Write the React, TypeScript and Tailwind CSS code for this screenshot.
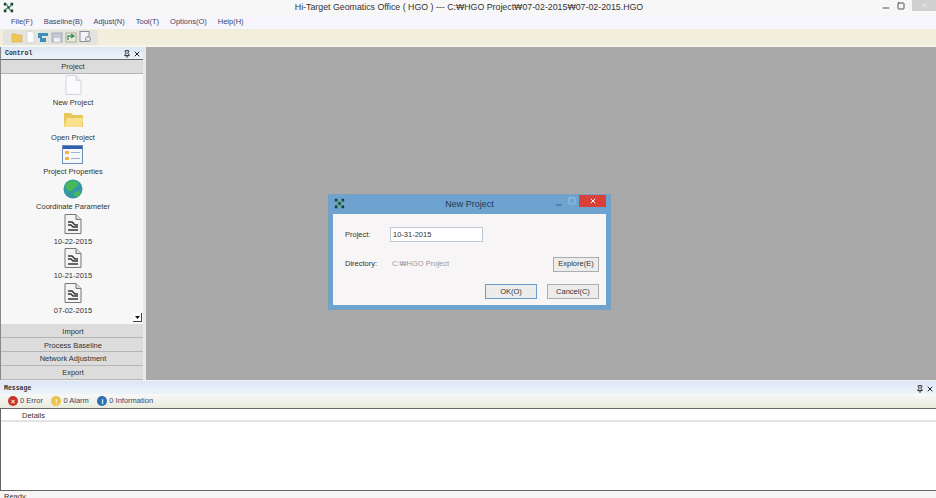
import { X, Pin, Minus, Square } from 'lucide-react';

const FONT = "font-['Liberation_Sans',Arial,sans-serif]";

const menus = ['File(F)', 'Baseline(B)', 'Adjust(N)', 'Tool(T)', 'Options(O)', 'Help(H)'];

// App logo, small green/black squares
const Logo = ({ size = 11 }: { size?: number }) => (
  <svg width={size} height={size} viewBox="0 0 13 13">
    <path d="M1 1h3v3H1zM9 1h3v3H9zM1 9h3v3H1zM9 9h3v3H9zM5 5h3v3H5z" fill="#1d3b35" />
    <path d="M4 3h2v2H4zM7 8h2v2H7zM3 7h2v2H3zM8 3h2v3H8z" fill="#3fa55a" />
  </svg>
);

const NewFileIcon = () => (
  <svg width="17" height="20" viewBox="0 0 17 20">
    <path d="M1 .5h10l5 5v14H1z" fill="#fbfbfe" stroke="#d2d4e0" />
    <path d="M11 .5v5h5" fill="#e6e7f0" stroke="#d2d4e0" />
  </svg>
);

const FolderIcon = () => (
  <svg width="21" height="17" viewBox="0 0 21 17">
    <path d="M1 16V2h7l2 2h10v12z" fill="#e9c65c" />
    <path d="M1 16l3-9h16.500l-2 9z" fill="#f9e08c" />
  </svg>
);

const PropertiesIcon = () => (
  <svg width="21" height="19" viewBox="0 0 21 19">
    <rect x=".5" y=".5" width="20" height="18" fill="#f4f7fb" stroke="#6f8db8" />
    <rect x="1" y="1" width="19" height="3" fill="#2f5fae" />
    <rect x="3" y="6" width="4" height="3" fill="#f0b04a" />
    <rect x="3" y="12" width="4" height="3" fill="#f0b04a" />
    <rect x="9" y="7" width="9" height="1" fill="#9fb4d0" />
    <rect x="9" y="13" width="9" height="1" fill="#9fb4d0" />
  </svg>
);

const GlobeIcon = () => (
  <svg width="20" height="20" viewBox="0 0 21 21">
    <circle cx="10.500" cy="10.500" r="10" fill="#3397a8" />
    <path d="M3 5c3-3 8-4 12-2 2 2 1 5-2 6-2 1-3 4-6 4-3-1-6-5-4-8zM12 14c3-1 6-2 7 0-1 3-4 5-6 5-2-1-2-4-1-5z" fill="#46b85a" />
  </svg>
);

const BaselineFileIcon = () => (
  <svg width="18" height="20" viewBox="0 0 18 20">
    <path d="M1 .5h11l5 5v14H1z" fill="#f4f4f4" stroke="#777" />
    <path d="M12 .5v5h5" fill="#ddd" stroke="#777" />
    <path d="M4 8h4l3 3h3M4 11h3l2 2h5" fill="none" stroke="#333" strokeWidth="1.400" />
    <rect x="4" y="15" width="10" height="2" fill="#666" />
  </svg>
);

const controlItems = [
  { icon: <NewFileIcon />, label: 'New Project' },
  { icon: <FolderIcon />, label: 'Open Project' },
  { icon: <PropertiesIcon />, label: 'Project Properties' },
  { icon: <GlobeIcon />, label: 'Coordinate Parameter' },
  { icon: <BaselineFileIcon />, label: '10-22-2015' },
  { icon: <BaselineFileIcon />, label: '10-21-2015' },
  { icon: <BaselineFileIcon />, label: '07-02-2015' },
];

// Small toolbar glyphs, faded like the reference
const toolIcons = [
  <svg key="open" width="12" height="11" viewBox="0 0 12 11">
    <path d="M1 10V2h4l1 1h5v7z" fill="#efc558" stroke="#d0a848" strokeWidth=".5" />
  </svg>,
  <svg key="new" width="10" height="12" viewBox="0 0 10 12">
    <path d="M2 .5h5l2 2v9H2z" fill="#fcfcfc" stroke="#d8d8d8" />
  </svg>,
  <svg key="import" width="12" height="11" viewBox="0 0 12 11">
    <path d="M1 1h10v3H5v2h4v4H3V6H1z" fill="#3d8fb8" />
  </svg>,
  <svg key="save" width="12" height="11" viewBox="0 0 12 11">
    <rect x="1" y="1" width="10" height="9" fill="#c5c9d4" stroke="#a8acb8" />
    <rect x="3" y="6" width="6" height="4" fill="#eceef2" />
  </svg>,
  <svg key="export" width="12" height="11" viewBox="0 0 12 11">
    <rect x="1" y="1" width="10" height="9" fill="#e8ecd8" stroke="#a8b098" />
    <path d="M3 8V4h6M6 2l3 2-3 2" fill="none" stroke="#3f8f60" strokeWidth="1.300" />
  </svg>,
  <svg key="doc" width="13" height="12" viewBox="0 0 13 12">
    <rect x="1" y=".5" width="9" height="10" fill="#f4f4f8" stroke="#8c8c98" />
    <circle cx="9" cy="8" r="2.500" fill="#e8e8ee" stroke="#8c8c98" />
  </svg>,
];

const PanelHeader = ({ title, tall }: { title: string; tall?: boolean }) => (
  <div
    className={`flex items-center justify-between bg-gradient-to-b from-[#dbe7f5] to-[#eef3fa] pl-1 pr-[2px] ${
      tall ? 'h-[13px] pt-[3px]' : 'h-3 pt-[2px]'
    }`}
  >
    <span className="font-['Liberation_Mono',monospace] text-[6.500px] font-bold text-[#333]">{title}</span>
    <div className="flex items-center gap-[2px] text-[#222]">
      <Pin size={8} strokeWidth={3} />
      <X size={8} strokeWidth={3} />
    </div>
  </div>
);

const Section = ({ label }: { label: string }) => (
  <div className="flex h-[14px] items-center justify-center border-b border-[#b5b5b5] bg-[#dcdcdc] pl-[2px] pt-[1px] text-[7.500px] text-[#333]">
    {label}
  </div>
);

const DialogButton = ({ label, primary, small }: { label: string; primary?: boolean; small?: boolean }) => (
  <div
    className={`flex h-[15px] items-center justify-center border bg-[#ececec] text-[7.500px] text-[#333] ${
      primary ? 'w-[52px] border-[#6d9cc8]' : small ? 'w-[46px] border-[#adadad]' : 'w-[52px] border-[#adadad]'
    }`}
  >
    {label}
  </div>
);

const StatusItem = ({ color, glyph, label }: { color: string; glyph: string; label: string }) => (
  <div className="flex items-center gap-[2px]">
    <span
      className="flex h-[10px] w-[10px] items-center justify-center rounded-full text-[7px] font-bold leading-none text-white"
      style={{ backgroundColor: color }}
    >
      {glyph}
    </span>
    <span className="text-[7.500px] text-[#444466]">{label}</span>
  </div>
);

export default function App() {
  return (
    <div className={`relative flex h-[498px] w-[936px] flex-col overflow-hidden bg-[#f8f8f8] ${FONT}`}>
      {/* Title bar */}
      <div className="relative flex h-[15px] items-center justify-center bg-[#f7f7f7] pl-[2px]">
        <div className="absolute left-[3px] top-[2px]">
          <Logo />
        </div>
        <span className="text-[8.800px] text-[#333]">
          Hi-Target Geomatics Office ( HGO ) --- C:₩HGO Project₩07-02-2015₩07-02-2015.HGO
        </span>
        <div className="absolute right-0 top-0 flex items-start text-[#333]">
          <Minus size={10} strokeWidth={2} className="mr-[6px] mt-[3px]" />
          <Square size={8} strokeWidth={2.500} className="mr-[7px] mt-[2px]" />
          <div className="flex h-[11px] w-[24px] items-center justify-center bg-[#d0d0d0]">
            <X size={7} strokeWidth={2} className="text-white" />
          </div>
        </div>
      </div>

      {/* Menu */}
      <div className="flex h-[14px] items-center gap-[11px] bg-[#f5f5fb] pl-[11px] text-[7.500px] text-[#444466]">
        {menus.map((m) => (
          <span key={m}>{m}</span>
        ))}
      </div>

      {/* Toolbar */}
      <div className="flex h-[16px] items-center bg-[#f1eedb] pl-[3px]">
        <div className="flex h-[15px] w-[95px] items-center gap-[2px] bg-[#e4e4de] pl-[8px]">
          {toolIcons}
        </div>
      </div>
      <div className="h-[2px] bg-[#f7f5ea]" />

      {/* Main */}
      <div className="flex h-[333px]">
        <div className="flex w-[143px] flex-col border-l border-[#888] bg-[#f6f6f6]">
          <PanelHeader title="Control" />
          <div className="border-t border-[#666]">
            <Section label="Project" />
          </div>
          <div className="relative flex h-[252px] flex-col items-center overflow-hidden bg-[#f7f7f7] pl-[2px]">
            {controlItems.map((item) => (
              <div key={item.label} className="flex h-[34.700px] shrink-0 flex-col items-center">
                <div className="flex h-[22px] items-center">{item.icon}</div>
                <span className="mt-[2px] text-[7.500px] leading-[9px] text-[#333]">{item.label}</span>
              </div>
            ))}
            <div className="absolute bottom-[2px] right-[1px] flex h-[9px] w-[9px] items-center justify-center border-b border-r border-[#444] bg-white">
              <svg width="5" height="3" viewBox="0 0 5 3">
                <path d="M0 0h5L2.500 3z" fill="#111" />
              </svg>
            </div>
          </div>
          <Section label="Import" />
          <Section label="Process Baseline" />
          <Section label="Network Adjustment" />
          <Section label="Export" />
        </div>
        <div className="w-[3px] bg-[#e8e8e8]" />
        <div className="flex-1 bg-[#a9a9a9]" />
      </div>

      <div className="h-[1px] bg-[#f0f0f0]" />

      {/* Message panel */}
      <div className="flex flex-col">
        <PanelHeader title="Message" tall />
        <div className="flex h-[14px] items-center gap-[8.500px] bg-gradient-to-b from-[#f8f8f8] to-[#e9ebdc] pl-[8px]">
          <StatusItem color="#c9352f" glyph="×" label="0 Error" />
          <StatusItem color="#ecc14f" glyph="!" label="0 Alarm" />
          <StatusItem color="#2f6fb8" glyph="i" label="0 Information" />
        </div>
        <div className="flex h-[83px] flex-col border-b border-l border-t border-[#666] bg-white">
          <div className="flex h-[13px] items-center border-b-2 border-[#e4e4e4] pl-[21px] pt-[3px] text-[7.500px] text-[#333]">
            Details
          </div>
        </div>
      </div>

      {/* Status bar */}
      <div className="flex-1 overflow-hidden bg-[#f5f5f5] pl-1 text-[7.500px] leading-[12px] text-[#333]">Ready</div>

      {/* New Project dialog */}
      <div className="absolute left-[328px] top-[194px] flex h-[116px] w-[283px] flex-col border border-[#7aa0c0] bg-[#6ea3cf] px-[4px] pb-[4px]">
        <div className="relative flex h-[19px] shrink-0 items-center justify-center text-[9px] text-[#1f3a55]">
          <div className="absolute left-[1px] top-[3px]">
            <Logo size={11} />
          </div>
          New Project
          <Minus size={8} strokeWidth={2} className="absolute right-[43px] top-[6px] text-[#1f3a55]" />
          <Square size={8} strokeWidth={1.500} className="absolute right-[30px] top-[2px] text-[#cfe0f0]" />
          <div className="absolute right-0 top-0 flex h-[12px] w-[27px] items-center justify-center bg-[#d9403a]">
            <X size={8} strokeWidth={3} className="text-white" />
          </div>
        </div>
        <div className="flex flex-1 flex-col bg-[#f7f5f5] pl-[12px] pr-[7px] pt-[13px] text-[7.500px] text-[#333]">
          <div className="flex h-[15px] items-center">
            <span className="w-[45px]">Project:</span>
            <div className="flex h-[15px] w-[93px] items-center border border-[#bfc8d2] bg-white pl-[2px]">10-31-2015</div>
          </div>
          <div className="mt-[14px] flex h-[16px] items-center">
            <span className="w-[47px]">Directory:</span>
            <span className="flex-1 text-[#9a9a9a]">C:₩HGO Project</span>
            <DialogButton label="Explore(E)" small />
          </div>
          <div className="mt-[12px] flex justify-end gap-[10px]">
            <DialogButton label="OK(O)" primary />
            <DialogButton label="Cancel(C)" />
          </div>
        </div>
      </div>
    </div>
  );
}
